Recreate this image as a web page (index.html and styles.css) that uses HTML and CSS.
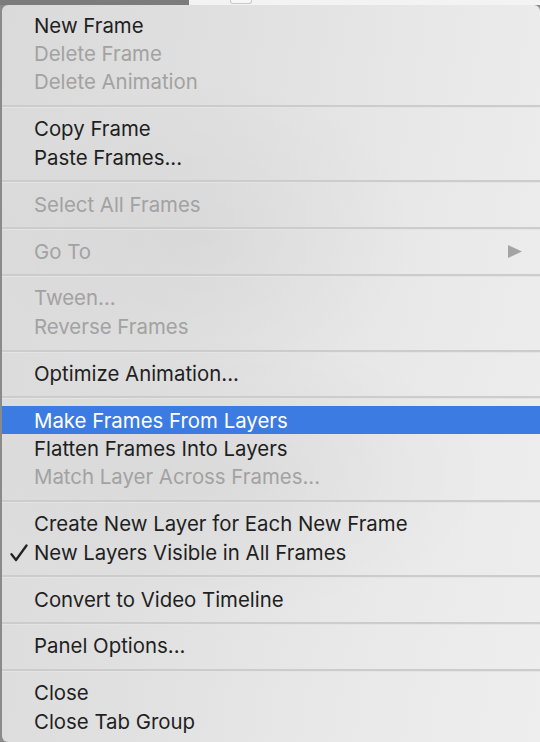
FILE: index.html
```html
<!DOCTYPE html>
<html>
<head>
<meta charset="utf-8">
<link rel="stylesheet" href="styles.css">
</head>
<body>
<div class="backdrop">
  <div class="topstrip">
    <div class="strip-dark"></div>
    <div class="strip-light"><span class="strip-box"></span></div>
  </div>
  <div class="main">
    <div class="gutter"></div>
    <div class="menu">
      <div class="item">New Frame</div>
      <div class="item off">Delete Frame</div>
      <div class="item off">Delete Animation</div>
      <div class="sep"></div>
      <div class="item">Copy Frame</div>
      <div class="item">Paste Frames...</div>
      <div class="sep"></div>
      <div class="item off">Select All Frames</div>
      <div class="sep"></div>
      <div class="item off sub">Go To<svg class="arrow" width="14" height="13" viewBox="0 0 14 13"><path d="M0 0 L14 6.5 L0 13 Z" fill="#a4a4a4"/></svg></div>
      <div class="sep"></div>
      <div class="item off">Tween...</div>
      <div class="item off">Reverse Frames</div>
      <div class="sep"></div>
      <div class="item">Optimize Animation...</div>
      <div class="sep"></div>
      <div class="item hi">Make Frames From Layers</div>
      <div class="item">Flatten Frames Into Layers</div>
      <div class="item off">Match Layer Across Frames...</div>
      <div class="sep"></div>
      <div class="item">Create New Layer for Each New Frame</div>
      <div class="item"><svg class="check" width="18" height="18" viewBox="0 0 18 18"><path d="M1.5 10.2 L6 16 L16.5 1.5" fill="none" stroke="#222" stroke-width="2.3" stroke-linecap="round" stroke-linejoin="round"/></svg>New Layers Visible in All Frames</div>
      <div class="sep"></div>
      <div class="item">Convert to Video Timeline</div>
      <div class="sep"></div>
      <div class="item">Panel Options...</div>
      <div class="sep"></div>
      <div class="item">Close</div>
      <div class="item">Close Tab Group</div>
    </div>
  </div>
</div>
</body>
</html>
```

FILE: styles.css
```css
html, body {
  margin: 0;
  padding: 0;
  width: 540px;
  height: 742px;
  overflow: hidden;
  background: #8a8a8a;
}

.backdrop {
  display: flex;
  flex-direction: column;
  width: 540px;
  height: 742px;
}

.topstrip {
  display: flex;
  height: 5px;
  flex: none;
}

.strip-dark {
  width: 189px;
  background: #7c7c7c;
}

.strip-light {
  flex: 1;
  background: #f3f3f3;
  padding-left: 41px;
}

.strip-box {
  display: block;
  width: 20px;
  height: 3px;
  border: 1px solid #c9c9c9;
  border-top: none;
  border-radius: 0 0 3px 3px;
  background: #f7f7f7;
}

.main {
  display: flex;
  flex: 1;
  min-height: 0;
}

.gutter {
  width: 2px;
  background: #8a8a8a;
  flex: none;
}

.menu {
  flex: 1;
  box-sizing: border-box;
  padding: 6px 0 7px 0;
  border-radius: 6px 6px 0 6px;
  background:
    radial-gradient(ellipse 260px 140px at 230px 470px, rgba(0,0,0,0.035), rgba(0,0,0,0)),
    radial-gradient(ellipse 220px 160px at 200px 230px, rgba(0,0,0,0.03), rgba(0,0,0,0)),
    linear-gradient(100deg, #dadada 0%, #e0e0e0 35%, #e9e9e9 70%, #eeeeee 100%);
  font-family: Inter, "Noto Sans", "Liberation Sans", sans-serif;
  font-size: 20.4px;
  color: #1f1f1f;
}

.item {
  position: relative;
  display: flex;
  align-items: center;
  height: 28.4px;
  padding-left: 32px;
  padding-right: 18px;
  white-space: nowrap;
}

.item.off {
  color: #a2a2a2;
}

.item.hi {
  background: #3b7be2;
  color: #ffffff;
}

.item.sub {
  justify-content: space-between;
}

.check {
  position: absolute;
  left: 8px;
  top: 6px;
}

.sep {
  height: 18.5px;
  box-sizing: border-box;
  padding-top: 9px;
}

.sep::before {
  content: "";
  display: block;
  height: 2px;
  background: #cccccc;
  border-bottom: 1px solid #e4e4e4;
}
```
